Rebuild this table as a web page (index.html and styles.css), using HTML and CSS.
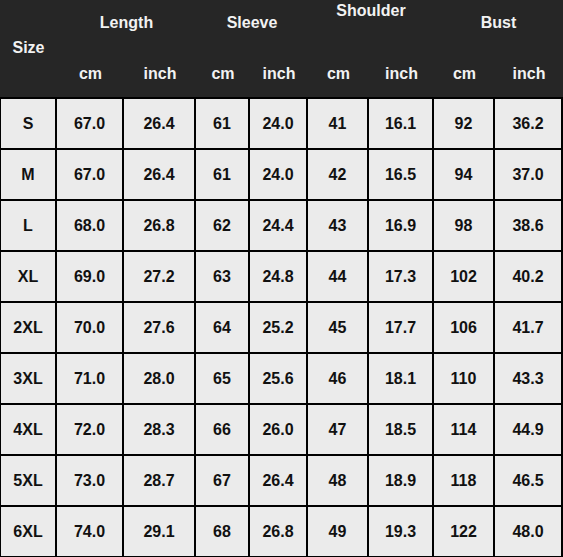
FILE: index.html
```html
<!DOCTYPE html>
<html>
<head>
<meta charset="utf-8">
<link rel="stylesheet" href="styles.css">
</head>
<body>
<div class="chart">
  <div class="head">
    <div class="h-size">Size</div>
    <div class="h-group g-length">Length</div>
    <div class="h-group g-sleeve">Sleeve</div>
    <div class="h-group g-shoulder">Shoulder</div>
    <div class="h-group g-bust">Bust</div>
    <div class="h-unit">cm</div><div class="h-unit">inch</div>
    <div class="h-unit">cm</div><div class="h-unit">inch</div>
    <div class="h-unit">cm</div><div class="h-unit">inch</div>
    <div class="h-unit">cm</div><div class="h-unit">inch</div>
  </div>
  <div class="body">
    <div class="c">S</div><div class="c">67.0</div><div class="c">26.4</div><div class="c">61</div><div class="c">24.0</div><div class="c">41</div><div class="c">16.1</div><div class="c">92</div><div class="c">36.2</div>
    <div class="c">M</div><div class="c">67.0</div><div class="c">26.4</div><div class="c">61</div><div class="c">24.0</div><div class="c">42</div><div class="c">16.5</div><div class="c">94</div><div class="c">37.0</div>
    <div class="c">L</div><div class="c">68.0</div><div class="c">26.8</div><div class="c">62</div><div class="c">24.4</div><div class="c">43</div><div class="c">16.9</div><div class="c">98</div><div class="c">38.6</div>
    <div class="c">XL</div><div class="c">69.0</div><div class="c">27.2</div><div class="c">63</div><div class="c">24.8</div><div class="c">44</div><div class="c">17.3</div><div class="c">102</div><div class="c">40.2</div>
    <div class="c">2XL</div><div class="c">70.0</div><div class="c">27.6</div><div class="c">64</div><div class="c">25.2</div><div class="c">45</div><div class="c">17.7</div><div class="c">106</div><div class="c">41.7</div>
    <div class="c">3XL</div><div class="c">71.0</div><div class="c">28.0</div><div class="c">65</div><div class="c">25.6</div><div class="c">46</div><div class="c">18.1</div><div class="c">110</div><div class="c">43.3</div>
    <div class="c">4XL</div><div class="c">72.0</div><div class="c">28.3</div><div class="c">66</div><div class="c">26.0</div><div class="c">47</div><div class="c">18.5</div><div class="c">114</div><div class="c">44.9</div>
    <div class="c">5XL</div><div class="c">73.0</div><div class="c">28.7</div><div class="c">67</div><div class="c">26.4</div><div class="c">48</div><div class="c">18.9</div><div class="c">118</div><div class="c">46.5</div>
    <div class="c">6XL</div><div class="c">74.0</div><div class="c">29.1</div><div class="c">68</div><div class="c">26.8</div><div class="c">49</div><div class="c">19.3</div><div class="c">122</div><div class="c">48.0</div>
  </div>
</div>
</body>
</html>
```

FILE: styles.css
```css
html, body {
  margin: 0;
  padding: 0;
  background: #000;
}
.chart {
  width: 563px;
  height: 557px;
  background: #000;
  font-family: "Liberation Sans", Arial, sans-serif;
  font-weight: bold;
  font-size: 16px;
  overflow: hidden;
}
.head {
  height: 97px;
  background: #262626;
  color: #f2f2f2;
  display: grid;
  grid-template-columns: 55px 65px 70px 52px 56px 59px 63px 59px 66px;
  grid-template-rows: 46px 51px;
  column-gap: 2px;
  padding-left: 1px;
  box-sizing: border-box;
}
.h-size {
  grid-row: 1 / 3;
  grid-column: 1;
  display: flex;
  align-items: center;
  justify-content: center;
  padding-bottom: 1px;
}
.h-group {
  grid-row: 1;
  display: flex;
  align-items: center;
  justify-content: center;
  padding-bottom: 1px;
}
.g-length { grid-column: 2 / 4; }
.g-sleeve { grid-column: 4 / 6; }
.g-shoulder { grid-column: 6 / 8; align-items: flex-start; padding-top: 2px; }
.g-bust { grid-column: 8 / 10; }
.h-unit {
  grid-row: 2;
  display: flex;
  align-items: center;
  justify-content: center;
  padding-top: 4px;
}
.body {
  margin-top: 2px;
  display: grid;
  grid-template-columns: 54px 65px 70px 52px 56px 59px 63px 59px 66px;
  grid-auto-rows: 49px;
  gap: 2px;
  padding-left: 1px;
}
.c {
  background: #ebebeb;
  color: #111;
  display: flex;
  align-items: center;
  justify-content: center;
  padding-top: 1px;
}
```
